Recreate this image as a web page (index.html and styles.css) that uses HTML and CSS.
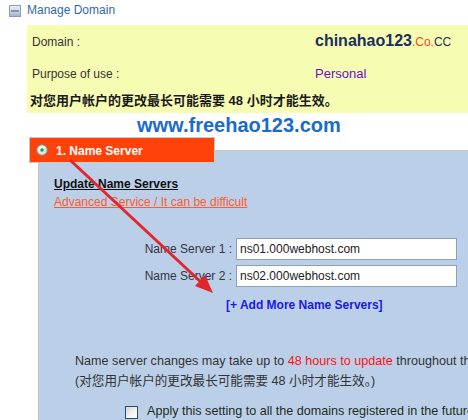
FILE: index.html
```html
<!DOCTYPE html>
<html>
<head>
<meta charset="utf-8">
<link rel="stylesheet" href="styles.css">
</head>
<body>
<div class="page">
  <div class="header">
    <svg class="hicon" width="12" height="12" viewBox="0 0 12 12">
      <defs>
        <linearGradient id="hg" x1="0" y1="0" x2="0" y2="1">
          <stop offset="0" stop-color="#eef2f8"/>
          <stop offset="0.5" stop-color="#c9d4e4"/>
          <stop offset="1" stop-color="#9fb1cb"/>
        </linearGradient>
      </defs>
      <rect x="0.5" y="0.5" width="11" height="11" fill="url(#hg)" stroke="#8a9cb6"/>
      <rect x="2" y="5" width="8" height="2" fill="#7f95b5"/>
    </svg>
    <span class="htitle">Manage Domain</span>
  </div>

  <div class="info">
    <div class="row r1"><span class="label">Domain :</span><span class="dname">chinahao123</span><span class="dco">.Co.</span><span class="dcc">CC</span></div>
    <div class="row r2"><span class="label">Purpose of use :</span><span class="purpose">Personal</span></div>
    <div class="row r3">对您用户帐户的更改最长可能需要 48 小时才能生效。</div>
  </div>

  <div class="site">www.freehao123.com</div>

  <div class="tab">
    <svg class="radio" width="12" height="12" viewBox="0 0 12 12">
      <defs>
        <radialGradient id="rg" cx="0.4" cy="0.35" r="0.7">
          <stop offset="0" stop-color="#ffffff"/>
          <stop offset="1" stop-color="#cfd6d0"/>
        </radialGradient>
      </defs>
      <circle cx="6" cy="6" r="5.3" fill="url(#rg)" stroke="#7a8a80" stroke-width="1"/>
      <circle cx="6" cy="6" r="1.8" fill="#1fa035"/>
    </svg>
    <span class="tabtext">1. Name Server</span>
  </div>

  <div class="panel">
    <div class="ptitle">Update Name Servers</div>
    <div class="adv">Advanced Service / It can be difficult</div>

    <div class="nsrow first"><span class="nslabel">Name Server 1 :</span><span class="nsinput">ns01.000webhost.com</span></div>
    <div class="nsrow"><span class="nslabel">Name Server 2 :</span><span class="nsinput">ns02.000webhost.com</span></div>

    <div class="addmore">[+ Add More Name Servers]</div>

    <div class="msg">Name server changes may take up to <span class="red">48 hours to update</span> throughout the</div>
    <div class="msg">(对您用户帐户的更改最长可能需要 48 小时才能生效。)</div>

    <div class="apply"><span class="cbox"></span><span class="applytext">Apply this setting to all the domains registered in the future</span></div>
  </div>

  <svg class="arrow" width="468" height="420" viewBox="0 0 468 420">
    <line x1="70" y1="160" x2="203" y2="284" stroke="#e3262b" stroke-width="3"/>
    <polygon points="213,293 195,286 205,275" fill="#e3262b"/>
  </svg>
</div>
</body>
</html>
```

FILE: styles.css
```css
html, body {
  margin: 0;
  padding: 0;
  background: #ffffff;
  overflow: hidden;
}
.page {
  position: relative;
  width: 468px;
  height: 420px;
  overflow: hidden;
  font-family: "Liberation Sans", Arial, "Noto Sans CJK SC", sans-serif;
  font-size: 12px;
  color: #333333;
}
.header {
  height: 25px;
  display: flex;
  align-items: flex-start;
}
.hicon {
  margin: 5px 0 0 9px;
}
.htitle {
  margin: 3px 0 0 6px;
  line-height: 14px;
  color: #2e6aa8;
}
.info {
  margin-left: 27px;
  background: #f7fcb3;
  height: 88px;
}
.row {
  white-space: nowrap;
}
.label {
  display: inline-block;
  width: 288px;
  padding-left: 5px;
  box-sizing: border-box;
}
.r1 {
  height: 31px;
  line-height: 31px;
}
.r2 {
  height: 36px;
  line-height: 36px;
}
.r3 {
  padding-left: 3px;
  height: 18px;
  line-height: 18px;
  font-size: 13px;
  font-weight: bold;
  color: #1a1a1a;
}
.dname {
  font-size: 16px;
  font-weight: bold;
  color: #1b2f5c;
}
.dco {
  color: #ff4a10;
}
.dcc {
  color: #1b2f5c;
}
.purpose {
  font-size: 13px;
  color: #6a0fc8;
}
.site {
  height: 24px;
  line-height: 24px;
  padding-left: 137px;
  font-size: 20px;
  font-weight: bold;
  color: #1a6bcc;
}
.tab {
  position: relative;
  z-index: 1;
  margin-left: 29px;
  width: 184px;
  height: 24px;
  background: #ff420a;
  border: 1px solid #c9c9c9;
  margin-bottom: -13px;
  display: flex;
  align-items: center;
}
.radio {
  margin-left: 6px;
}
.tabtext {
  margin-left: 8px;
  color: #ffffff;
  font-weight: bold;
  line-height: 16px;
  padding-top: 1px;
}
.panel {
  margin-left: 38px;
  height: 270px;
  background: #bccfe9;
  border-left: 1px solid #c6c6c6;
  border-top: 1px solid #c6c6c6;
  padding-left: 15px;
  padding-top: 24px;
  white-space: nowrap;
}
.ptitle {
  line-height: 18px;
  font-weight: bold;
  color: #111111;
  text-decoration: underline;
}
.adv {
  line-height: 18px;
  color: #ff5a2a;
  text-decoration: underline;
}
.nsrow {
  display: flex;
  align-items: center;
  margin-top: 5px;
}
.nsrow.first {
  margin-top: 27px;
}
.nslabel {
  width: 178px;
  text-align: right;
  color: #333344;
}
.nsinput {
  margin-left: 4px;
  width: 216px;
  height: 20px;
  line-height: 20px;
  padding-left: 3px;
  background: #ffffff;
  border: 1px solid #8aa0bc;
  color: #222222;
}
.addmore {
  margin-top: 10px;
  padding-left: 172px;
  line-height: 16px;
  font-weight: bold;
  color: #1a1ae8;
}
.msg {
  padding-left: 21px;
  line-height: 20px;
  font-size: 12.6px;
}
.addmore + .msg {
  margin-top: 38px;
}
.red {
  color: #ff1010;
}
.apply {
  margin-top: 10px;
  padding-left: 71px;
  display: flex;
  align-items: center;
  height: 20px;
}
.cbox {
  flex: none;
  width: 11px;
  height: 11px;
  border: 1px solid #2a4a6a;
  background: linear-gradient(135deg, #d6d6cc 0%, #f6f6f0 60%, #ffffff 100%);
  margin-right: 9px;
  margin-top: 2px;
}
.applytext {
  font-size: 12.6px;
  color: #1c2c1c;
}
.arrow {
  position: absolute;
  top: 0;
  left: 0;
  pointer-events: none;
  z-index: 2;
}
```
